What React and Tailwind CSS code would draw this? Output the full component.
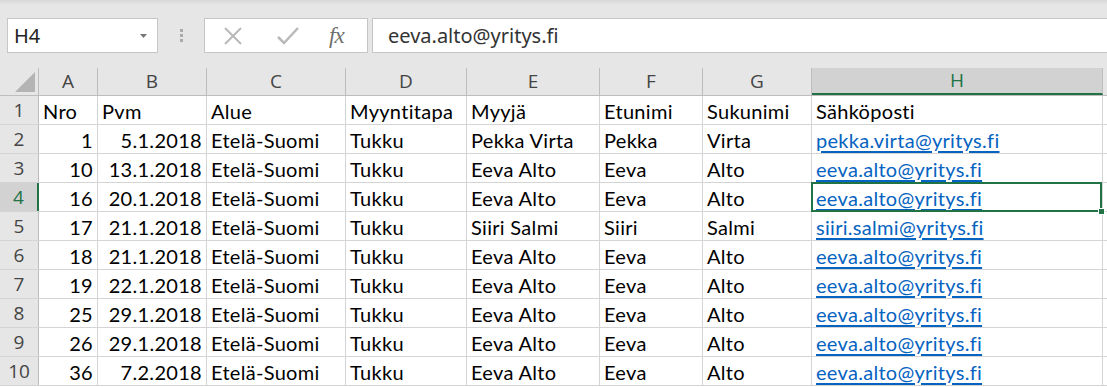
import React from 'react'

const cols = ['A', 'B', 'C', 'D', 'E', 'F', 'G', 'H']
const widths = ['w-[59px]', 'w-[109px]', 'w-[139px]', 'w-[121px]', 'w-[133px]', 'w-[103px]', 'w-[109px]', 'w-[291px]']

const header = ['Nro', 'Pvm', 'Alue', 'Myyntitapa', 'Myyjä', 'Etunimi', 'Sukunimi', 'Sähköposti']

const rows = [
  ['1', '5.1.2018', 'Pekka Virta', 'Pekka', 'Virta', 'pekka.virta@yritys.fi'],
  ['10', '13.1.2018', 'Eeva Alto', 'Eeva', 'Alto', 'eeva.alto@yritys.fi'],
  ['16', '20.1.2018', 'Eeva Alto', 'Eeva', 'Alto', 'eeva.alto@yritys.fi'],
  ['17', '21.1.2018', 'Siiri Salmi', 'Siiri', 'Salmi', 'siiri.salmi@yritys.fi'],
  ['18', '21.1.2018', 'Eeva Alto', 'Eeva', 'Alto', 'eeva.alto@yritys.fi'],
  ['19', '22.1.2018', 'Eeva Alto', 'Eeva', 'Alto', 'eeva.alto@yritys.fi'],
  ['25', '29.1.2018', 'Eeva Alto', 'Eeva', 'Alto', 'eeva.alto@yritys.fi'],
  ['26', '29.1.2018', 'Eeva Alto', 'Eeva', 'Alto', 'eeva.alto@yritys.fi'],
  ['36', '7.2.2018', 'Eeva Alto', 'Eeva', 'Alto', 'eeva.alto@yritys.fi'],
]

const cell = 'h-full shrink-0 border-r border-[#d4d4d4] px-[4px] flex items-center whitespace-nowrap'

function Toolbar() {
  return (
    <div className="h-[68px] bg-[#e6e6e6] relative">
      <div className="h-[5px] bg-gradient-to-b from-[#d8d8d8] to-[#e6e6e6]" />
      <div className="flex items-start pt-[13px] pl-[7px]">
        {/* Name box */}
        <div className="w-[151px] h-[35px] bg-white border border-[#c6c6c6] flex items-center justify-between pl-[6px] pr-[10px]">
          <span className="text-[20px] text-[#222] font-['Noto_Sans',sans-serif]">H4</span>
          <svg width="7" height="4" viewBox="0 0 7 4"><path d="M0 0h7L3.5 4z" fill="#777" /></svg>
        </div>
        {/* dots */}
        <div className="w-[46px] h-[35px] flex flex-col items-center justify-center gap-[2px]">
          <div className="w-[3px] h-[3px] bg-[#aaa]" />
          <div className="w-[3px] h-[3px] bg-[#aaa]" />
          <div className="w-[3px] h-[3px] bg-[#aaa]" />
        </div>
        {/* formula buttons */}
        <div className="w-[164px] h-[35px] bg-white border border-[#c6c6c6] flex items-center">
          <svg className="ml-[18px]" width="20" height="20" viewBox="0 0 20 20">
            <path d="M2 2L18 18M18 2L2 18" stroke="#b9b9b9" strokeWidth="2" />
          </svg>
          <svg className="ml-[34px]" width="22" height="18" viewBox="0 0 22 18">
            <path d="M1 10L7 16L21 1" stroke="#b9b9b9" strokeWidth="2.5" fill="none" />
          </svg>
          <span className="ml-[30px] text-[23px] leading-none italic text-[#6f6f6f] font-['Liberation_Serif',serif] tracking-[-1px]">fx</span>
        </div>
        {/* formula input */}
        <div className="ml-[4px] flex-1 h-[35px] bg-white border border-[#c6c6c6] border-r-0 flex items-center pl-[15px]">
          <span className="text-[20px] text-[#333] font-['Noto_Sans',sans-serif]">eeva.alto@yritys.fi</span>
        </div>
      </div>
    </div>
  )
}

function ColumnHeader() {
  return (
    <div className="flex h-[28px] bg-[#e6e6e6] border-b border-[#bdbdbd]">
      <div className="w-[39px] shrink-0 h-full border-r border-[#bdbdbd] relative">
        <svg className="absolute right-[3px] bottom-[3px]" width="20" height="20" viewBox="0 0 20 20">
          <path d="M20 0V20H0z" fill="#b4b4b4" />
        </svg>
      </div>
      {cols.map((c, i) => (
        <div
          key={c}
          className={`${widths[i]} shrink-0 h-full border-r border-[#bdbdbd] flex items-center justify-center text-[19px] font-['Open_Sans',sans-serif] ${c === 'H' ? 'bg-[#d2d2d2] text-[#217346] border-b-2 border-b-[#217346]' : 'text-[#444]'}`}
        >
          {c}
        </div>
      ))}
      <div className="flex-1" />
    </div>
  )
}

function Row({ n, values, selected }) {
  return (
    <div className="flex h-[29px] border-b border-[#d4d4d4] bg-white text-[20px] tracking-[0.3px] text-black font-['Lato',sans-serif]">
      <div className={`w-[39px] shrink-0 h-full flex items-center justify-center text-[19px] tracking-normal font-['Open_Sans',sans-serif] ${selected ? 'bg-[#d2d2d2] text-[#217346] border-r-2 border-r-[#217346]' : 'bg-[#e6e6e6] text-[#444] border-r border-[#bdbdbd]'}`}>
        {n}
      </div>
      {values.map((v, i) => {
        const right = n > 1 && (i === 0 || i === 1)
        const link = n > 1 && i === 7
        return (
          <div key={i} className={`${widths[i]} ${cell} pt-[1px] ${right ? 'justify-end' : ''} ${link && selected ? 'relative z-10' : 'overflow-hidden'}`}>
            {link ? (
              <span className="text-[#0563c1] underline underline-offset-[3px]">{v}</span>
            ) : (
              v
            )}
            {link && selected && (
              <>
                <div className="absolute left-[-1px] top-[-1px] right-[0px] bottom-[-1px] border-2 border-[#217346] pointer-events-none" />
                <div className="absolute right-[-3px] bottom-[-4px] w-[7px] h-[7px] bg-[#217346] border border-white" />
              </>
            )}
          </div>
        )
      })}
      <div className="flex-1" />
    </div>
  )
}

export default function App() {
  return (
    <div className="w-[1107px] h-[387px] overflow-hidden bg-white select-none">
      <Toolbar />
      <ColumnHeader />
      <Row n={1} values={header} />
      {rows.map((r, i) => {
        const [nro, pvm, myyja, etu, suku, email] = r
        return (
          <Row
            key={i}
            n={i + 2}
            selected={i + 2 === 4}
            values={[nro, pvm, 'Etelä-Suomi', 'Tukku', myyja, etu, suku, email]}
          />
        )
      })}
    </div>
  )
}
